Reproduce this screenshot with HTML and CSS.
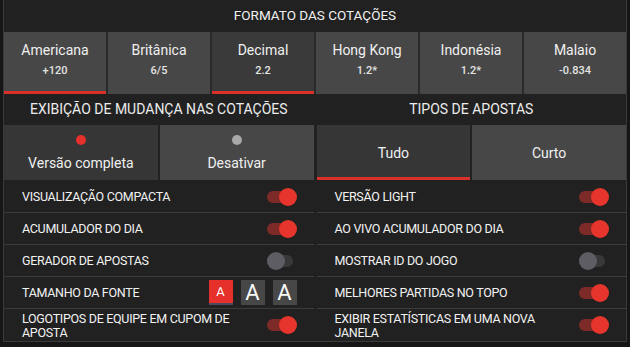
FILE: index.html
```html
<!DOCTYPE html>
<html lang="pt">
<head>
    <meta charset="UTF-8">
    <title>Configurações</title>
    <link rel="stylesheet" href="styles.css">
</head>
<body>
    <div class="panel">
        <div class="panel-title">FORMATO DAS COTAÇÕES</div>

        <div class="odds-tabs">
            <div class="odds-tab active"><span class="tab-name">Americana</span><span class="tab-value">+120</span></div>
            <div class="odds-tab"><span class="tab-name">Britânica</span><span class="tab-value">6/5</span></div>
            <div class="odds-tab active dark"><span class="tab-name">Decimal</span><span class="tab-value">2.2</span></div>
            <div class="odds-tab"><span class="tab-name">Hong Kong</span><span class="tab-value">1.2*</span></div>
            <div class="odds-tab"><span class="tab-name">Indonésia</span><span class="tab-value">1.2*</span></div>
            <div class="odds-tab"><span class="tab-name">Malaio</span><span class="tab-value">-0.834</span></div>
        </div>

        <div class="two-cols">
            <div class="col">
                <div class="section-title">EXIBIÇÃO DE MUDANÇA NAS COTAÇÕES</div>
                <div class="choice-row">
                    <div class="choice dark"><span class="dot on"></span>Versão completa</div>
                    <div class="choice"><span class="dot"></span>Desativar</div>
                </div>
            </div>
            <div class="col">
                <div class="section-title">TIPOS DE APOSTAS</div>
                <div class="choice-row">
                    <div class="choice dark underline">Tudo</div>
                    <div class="choice">Curto</div>
                </div>
            </div>
        </div>

        <div class="settings">
            <div class="setting"><span class="label">VISUALIZAÇÃO COMPACTA</span><span class="toggle on"></span></div>
            <div class="setting"><span class="label">VERSÃO LIGHT</span><span class="toggle on"></span></div>
            <div class="setting"><span class="label">ACUMULADOR DO DIA</span><span class="toggle on"></span></div>
            <div class="setting"><span class="label">AO VIVO ACUMULADOR DO DIA</span><span class="toggle on"></span></div>
            <div class="setting"><span class="label">GERADOR DE APOSTAS</span><span class="toggle"></span></div>
            <div class="setting"><span class="label">MOSTRAR ID DO JOGO</span><span class="toggle"></span></div>
            <div class="setting">
                <span class="label">TAMANHO DA FONTE</span>
                <div class="font-sizes">
                    <span class="font-btn small active">A</span>
                    <span class="font-btn">A</span>
                    <span class="font-btn">A</span>
                </div>
            </div>
            <div class="setting"><span class="label">MELHORES PARTIDAS NO TOPO</span><span class="toggle on"></span></div>
            <div class="setting"><span class="label wrap">LOGOTIPOS DE EQUIPE EM CUPOM DE APOSTA</span><span class="toggle on"></span></div>
            <div class="setting"><span class="label wrap">EXIBIR ESTATÍSTICAS EM UMA NOVA JANELA</span><span class="toggle on"></span></div>
        </div>
    </div>
</body>
</html>
```

FILE: styles.css
```css
body {
    margin: 0;
    background-color: #161616;
    font-family: Roboto, "Liberation Sans", sans-serif;
    color: #f0f0f0;
}

.panel {
    width: 622px;
    margin-left: 3px;
    background-color: #212121;
    border: 1px solid #3a3a3a;
    border-top: none;
}

.panel-title {
    height: 32px;
    line-height: 30px;
    text-align: center;
    font-size: 13.5px;
}

.odds-tabs {
    display: grid;
    grid-template-columns: repeat(6, 1fr);
    gap: 2px;
    background-color: #2a2a2a;
}

.odds-tab {
    height: 59px;
    display: flex;
    flex-direction: column;
    align-items: center;
    background-color: #474747;
    border-bottom: 3px solid transparent;
}

.odds-tab.dark {
    background-color: #3a3a3a;
}

.odds-tab.active {
    border-bottom-color: #d9302a;
}

.tab-name {
    font-size: 14px;
    margin-top: 10px;
}

.tab-value {
    font-size: 11px;
    font-weight: 500;
    color: #e4e4e4;
    margin-top: 6px;
}

.two-cols {
    display: grid;
    grid-template-columns: 1fr 1fr;
    gap: 3px;
}

.section-title {
    height: 31px;
    line-height: 31px;
    text-align: center;
    font-size: 14px;
    color: #ececec;
}

.choice-row {
    display: grid;
    grid-template-columns: 1fr 1fr;
    gap: 2px;
}

.choice {
    height: 55px;
    display: flex;
    flex-direction: column;
    align-items: center;
    justify-content: center;
    background-color: #474747;
    font-size: 14px;
    box-sizing: border-box;
}

.choice.dark {
    background-color: #363636;
}

.choice.underline {
    border-bottom: 3px solid #d9302a;
    padding-top: 3px;
}

.dot {
    width: 10px;
    height: 10px;
    border-radius: 50%;
    background-color: #a8a8a8;
    margin-bottom: 10px;
}

.dot.on {
    background-color: #e5302b;
}

.settings {
    display: grid;
    grid-template-columns: 1fr 1fr;
    column-gap: 3px;
    margin-top: 1px;
}

.setting {
    height: 31px;
    display: flex;
    align-items: center;
    justify-content: space-between;
    padding: 0 17px 0 18px;
    border-bottom: 1px solid #3c3c3c;
    font-size: 12.5px;
    letter-spacing: -0.3px;
    color: #f2f2f2;
}

.setting:nth-last-child(-n+2) {
    border-bottom: none;
    height: 32px;
}

.label.wrap {
    max-width: 245px;
    line-height: 14px;
    padding-top: 1px;
}

.toggle {
    position: relative;
    width: 30px;
    height: 18px;
}

.toggle::before {
    content: "";
    position: absolute;
    left: 0;
    top: 3px;
    width: 26px;
    height: 12px;
    border-radius: 6px;
    background-color: #383838;
}

.toggle::after {
    content: "";
    position: absolute;
    left: 0;
    top: 0;
    width: 18px;
    height: 18px;
    border-radius: 50%;
    background-color: #5e5d63;
}

.toggle.on::before {
    background-color: #7d2a28;
}

.toggle.on::after {
    left: 12px;
    background-color: #e5352c;
}

.font-sizes {
    display: flex;
    gap: 8px;
}

.font-btn {
    width: 24px;
    height: 25px;
    display: flex;
    align-items: center;
    justify-content: center;
    background-color: #474747;
    font-size: 22px;
    line-height: 1;
    letter-spacing: 0;
    color: #fafafa;
    box-sizing: border-box;
}

.font-btn.small {
    font-size: 13px;
}

.font-btn.active {
    background-color: #e5302b;
    border-bottom: 2px solid #4a4a60;
}
```
